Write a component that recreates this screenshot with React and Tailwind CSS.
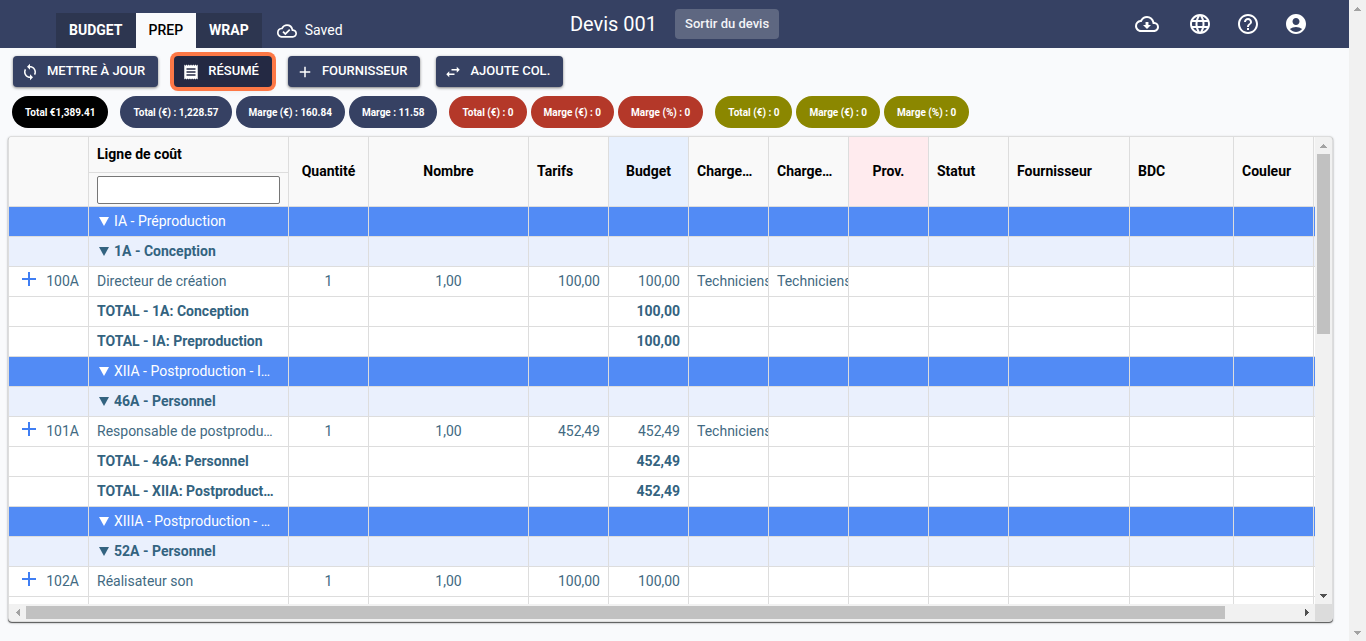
import React, { useState } from "react";
import clsx from "clsx";
import {
  MdAccountCircle,
  MdAdd,
  MdHelpOutline,
  MdLanguage,
  MdOutlineCloudDone,
  MdOutlineCloudDownload,
  MdReceipt,
  MdSwapHoriz,
  MdSync,
} from "react-icons/md";

const tabs = ["BUDGET", "PREP", "WRAP"];

const actions = [
  { label: "METTRE À JOUR", icon: MdSync },
  { label: "RÉSUMÉ", icon: MdReceipt, active: true },
  { label: "FOURNISSEUR", icon: MdAdd },
  { label: "AJOUTE COL.", icon: MdSwapHoriz },
];

const totals = [
  { color: "bg-black", items: ["Total €1,389.41"] },
  {
    color: "bg-[#364163]",
    items: ["Total (€) : 1,228.57", "Marge (€) : 160.84", "Marge : 11.58"],
  },
  {
    color: "bg-[#b43829]",
    items: ["Total (€) : 0", "Marge (€) : 0", "Marge (%) : 0"],
  },
  {
    color: "bg-[#8b8700]",
    items: ["Total (€) : 0", "Marge (€) : 0", "Marge (%) : 0"],
  },
];

const columns = [
  { key: "code", title: "", width: "w-[80px]" },
  { key: "line", title: "Ligne de coût", width: "w-[200px]", filter: true },
  { key: "qty", title: "Quantité", width: "w-[80px]", head: "text-center bg-[#f9f9f9]", cell: "text-center" },
  { key: "count", title: "Nombre", width: "w-[160px]", head: "text-center bg-[#f9f9f9]", cell: "text-center" },
  { key: "rate", title: "Tarifs", width: "w-[80px]", cell: "text-right" },
  { key: "budget", title: "Budget", width: "w-[80px]", head: "text-center bg-[#e7f0fe]", cell: "text-right" },
  { key: "charge1", title: "Charge…", width: "w-[80px]" },
  { key: "charge2", title: "Charge…", width: "w-[80px]" },
  { key: "prov", title: "Prov.", width: "w-[80px]", head: "text-center bg-[#ffebee]" },
  { key: "status", title: "Statut", width: "w-[80px]" },
  { key: "supplier", title: "Fournisseur", width: "w-[121px]" },
  { key: "bdc", title: "BDC", width: "w-[104px]" },
  { key: "color", title: "Couleur", width: "w-[80px]" },
];

const rows = [
  { type: "group", line: "IA - Préproduction" },
  { type: "subgroup", line: "1A - Conception" },
  {
    type: "item",
    code: "100A",
    line: "Directeur de création",
    qty: "1",
    count: "1,00",
    rate: "100,00",
    budget: "100,00",
    charge1: "Techniciens",
    charge2: "Techniciens",
  },
  { type: "total", line: "TOTAL - 1A: Conception", budget: "100,00" },
  { type: "total", line: "TOTAL - IA: Preproduction", budget: "100,00" },
  { type: "group", line: "XIIA - Postproduction - I…" },
  { type: "subgroup", line: "46A - Personnel" },
  {
    type: "item",
    code: "101A",
    line: "Responsable de postprodu…",
    qty: "1",
    count: "1,00",
    rate: "452,49",
    budget: "452,49",
    charge1: "Techniciens",
  },
  { type: "total", line: "TOTAL - 46A: Personnel", budget: "452,49" },
  { type: "total", line: "TOTAL - XIIA: Postproduct…", budget: "452,49" },
  { type: "group", line: "XIIIA - Postproduction - …" },
  { type: "subgroup", line: "52A - Personnel" },
  {
    type: "item",
    code: "102A",
    line: "Réalisateur son",
    qty: "1",
    count: "1,00",
    rate: "100,00",
    budget: "100,00",
  },
  { type: "total", line: "" },
];

const rowStyles = {
  group: "bg-[#528bf5] text-white",
  subgroup: "bg-[#eaf0fd] font-bold text-[#336380]",
  item: "bg-white text-[#426a82]",
  total: "bg-white font-bold text-[#336380]",
};

const arrowPaths = {
  up: "M0 4 L3.5 0 L7 4 Z",
  down: "M0 0 L3.5 4 L7 0 Z",
  left: "M4 0 L0 3.5 L4 7 Z",
  right: "M0 0 L4 3.5 L0 7 Z",
};

const ScrollArrow = ({ dir, dark }) => (
  <span className="flex h-[17px] w-[17px] shrink-0 items-center justify-center">
    <svg
      className={clsx(
        dir === "up" || dir === "down" ? "h-[4px] w-[7px]" : "h-[7px] w-[4px]",
        dark ? "fill-[#505050]" : "fill-[#a3a3a3]"
      )}
      shapeRendering="crispEdges"
    >
      <path d={arrowPaths[dir]} />
    </svg>
  </span>
);

const Header = ({ tab, setTab }) => (
  <header className="grid h-12 shrink-0 grid-cols-[1fr_auto_1fr] items-center bg-[#364163] text-white">
    <div className="flex h-full items-end pl-14">
      <nav className="flex">
        {tabs.map((t) => (
          <button
            key={t}
            onClick={() => setTab(t)}
            className={clsx(
              "h-[35px] px-[13px] pb-0.5 text-sm",
              t === tab
                ? "bg-[#f9fafc] font-medium text-black"
                : "bg-[#2d3650] font-bold text-white"
            )}
          >
            {t}
          </button>
        ))}
      </nav>
      <div className="flex h-[35px] items-center gap-2 pl-[15px] text-sm">
        <MdOutlineCloudDone size={20} />
        <span className="pb-0.5">Saved</span>
      </div>
    </div>

    <div className="flex items-center gap-[18px]">
      <h1 className="text-xl">Devis 001</h1>
      <button className="h-[30px] rounded bg-[#5e6781] px-2.5 text-[13px] font-medium text-[#f3f4f7]">
        Sortir du devis
      </button>
    </div>

    <div className="flex items-center justify-end gap-6 pr-[41px]">
      <button aria-label="Télécharger" className="mr-[5px]">
        <MdOutlineCloudDownload size={24} />
      </button>
      <button aria-label="Langue">
        <MdLanguage size={24} />
      </button>
      <button aria-label="Aide">
        <MdHelpOutline size={24} />
      </button>
      <button aria-label="Compte">
        <MdAccountCircle size={24} />
      </button>
    </div>
  </header>
);

const ActionButton = ({ label, icon: Icon, active }) => (
  <button
    className={clsx(
      "flex h-[31px] items-center gap-2 rounded pr-[13px] pl-2 text-[13px] font-medium text-white",
      active
        ? "bg-[#242943] shadow-md ring-4 ring-[#fd7846]"
        : "bg-[#364163] shadow-[0_1px_3px_rgba(0,0,0,0.5)]"
    )}
  >
    <Icon size={18} />
    <span className="pb-0.5">{label}</span>
  </button>
);

const Cell = ({ row, col }) => {
  const value = row[col.key];

  if (col.key === "code" && value) {
    return (
      <div className="flex items-center justify-between pr-px pl-1">
        <button aria-label={`Ajouter ${value}`} className="pb-0.5">
          <svg className="block h-[16px] w-[16px]" viewBox="0 0 16 16">
            <path d="M8 0v14M1 7h14" stroke="#3f7ef3" strokeWidth="2" fill="none" />
          </svg>
        </button>
        {value}
      </div>
    );
  }

  if (col.key === "line" && (row.type === "group" || row.type === "subgroup")) {
    return (
      <div className="flex items-center gap-[5px] pl-0.5">
        <svg className="h-[11px] w-[10px] shrink-0 fill-current" viewBox="0 0 10 11">
          <path d="M0 2h10L5 11z" />
        </svg>
        <span className="truncate">{value}</span>
      </div>
    );
  }

  return value;
};

const CostTable = () => {
  const [filter, setFilter] = useState("");
  const visible = rows.filter(
    (r) => r.type !== "item" || r.line.toLowerCase().includes(filter.toLowerCase())
  );

  return (
    <table className="w-full min-w-[1306px] table-fixed border-separate border-spacing-0 text-sm leading-5">
      <colgroup>
        {columns.map((c) => (
          <col key={c.key} className={c.width} />
        ))}
        <col />
      </colgroup>
      <thead>
        <tr className="h-[70px] text-black">
          {columns.map((c) => (
            <th
              key={c.key}
              className={clsx(
                "border-r border-b border-[#ddd] font-bold",
                c.filter ? "p-0 align-top" : "px-2 pt-0 pb-0.5",
                c.head || "bg-[#f9f9f9] text-left"
              )}
            >
              {c.filter ? (
                <>
                  <label
                    htmlFor="line-filter"
                    className="flex h-9 items-center border-b border-[#ddd] px-2 pb-0.5"
                  >
                    {c.title}
                  </label>
                  <div className="px-2 pt-[3px]">
                    <input
                      id="line-filter"
                      value={filter}
                      onChange={(e) => setFilter(e.target.value)}
                      className="block h-7 w-full rounded-xs border border-[#767676] bg-white px-1 font-normal"
                    />
                  </div>
                </>
              ) : (
                c.title
              )}
            </th>
          ))}
          <th className="border-b border-[#ddd] bg-[#f9f9f9] p-0" />
        </tr>
      </thead>
      <tbody>
        {visible.map((row, i) => (
          <tr key={i} className={clsx("h-[30px]", rowStyles[row.type])}>
            {columns.map((c) => (
              <td
                key={c.key}
                className={clsx(
                  "overflow-hidden border-r border-b border-[#ddd] px-2 pt-0 pb-0.5 whitespace-nowrap",
                  c.key === "line" && "text-ellipsis",
                  c.cell
                )}
              >
                <Cell row={row} col={c} />
              </td>
            ))}
            <td className="border-b border-[#ddd] p-0" />
          </tr>
        ))}
      </tbody>
    </table>
  );
};

const App = () => {
  const [tab, setTab] = useState("PREP");

  return (
    <div className="flex h-screen bg-[#f9fafc] font-['Roboto',sans-serif]">
      <div className="flex min-w-0 flex-1 flex-col">
        <Header tab={tab} setTab={setTab} />

        <div className="flex gap-4 px-[13px] pt-2">
          {actions.map((a) => (
            <ActionButton key={a.label} {...a} />
          ))}
        </div>

        <div className="flex gap-3 px-3 pt-[9px]">
          {totals.map((group, i) => (
            <div key={i} className="flex gap-1">
              {group.items.map((text) => (
                <span
                  key={text}
                  className={clsx(
                    "flex h-8 items-center rounded-full px-[13px] text-[10px] font-bold whitespace-nowrap text-white",
                    group.color
                  )}
                >
                  {text}
                </span>
              ))}
            </div>
          ))}
        </div>

        <main className="mt-2 mr-4 mb-[19px] ml-2 flex min-h-0 flex-1">
          <div className="flex min-w-0 flex-1 flex-col overflow-hidden rounded-sm border border-[#ddd] bg-[#dcdcdc] shadow-[0_1px_1px_rgba(0,0,0,0.6),0_1px_3px_rgba(0,0,0,0.2)]">
            <div className="flex min-h-0 flex-1">
              <div className="min-w-0 flex-1 overflow-hidden bg-white">
                <CostTable />
              </div>
              <div className="flex w-[17px] flex-col items-center bg-[#f1f1f1]">
                <ScrollArrow dir="up" />
                <div className="flex w-full flex-1 flex-col items-center">
                  <div className="h-5/12 w-[13px] bg-[#c1c1c1]" />
                </div>
                <ScrollArrow dir="down" dark />
              </div>
            </div>
            <div className="flex h-[17px] shrink-0 pr-[17px]">
              <div className="flex flex-1 items-center bg-[#f1f1f1]">
                <ScrollArrow dir="left" />
                <div className="flex-1">
                  <div className="h-[13px] w-33/35 bg-[#c1c1c1]" />
                </div>
                <ScrollArrow dir="right" dark />
              </div>
            </div>
          </div>
        </main>
      </div>

      <div className="flex w-[17px] shrink-0 flex-col justify-between bg-[#f1f1f1]">
        <ScrollArrow dir="up" />
        <ScrollArrow dir="down" />
      </div>
    </div>
  );
};

export default App;
